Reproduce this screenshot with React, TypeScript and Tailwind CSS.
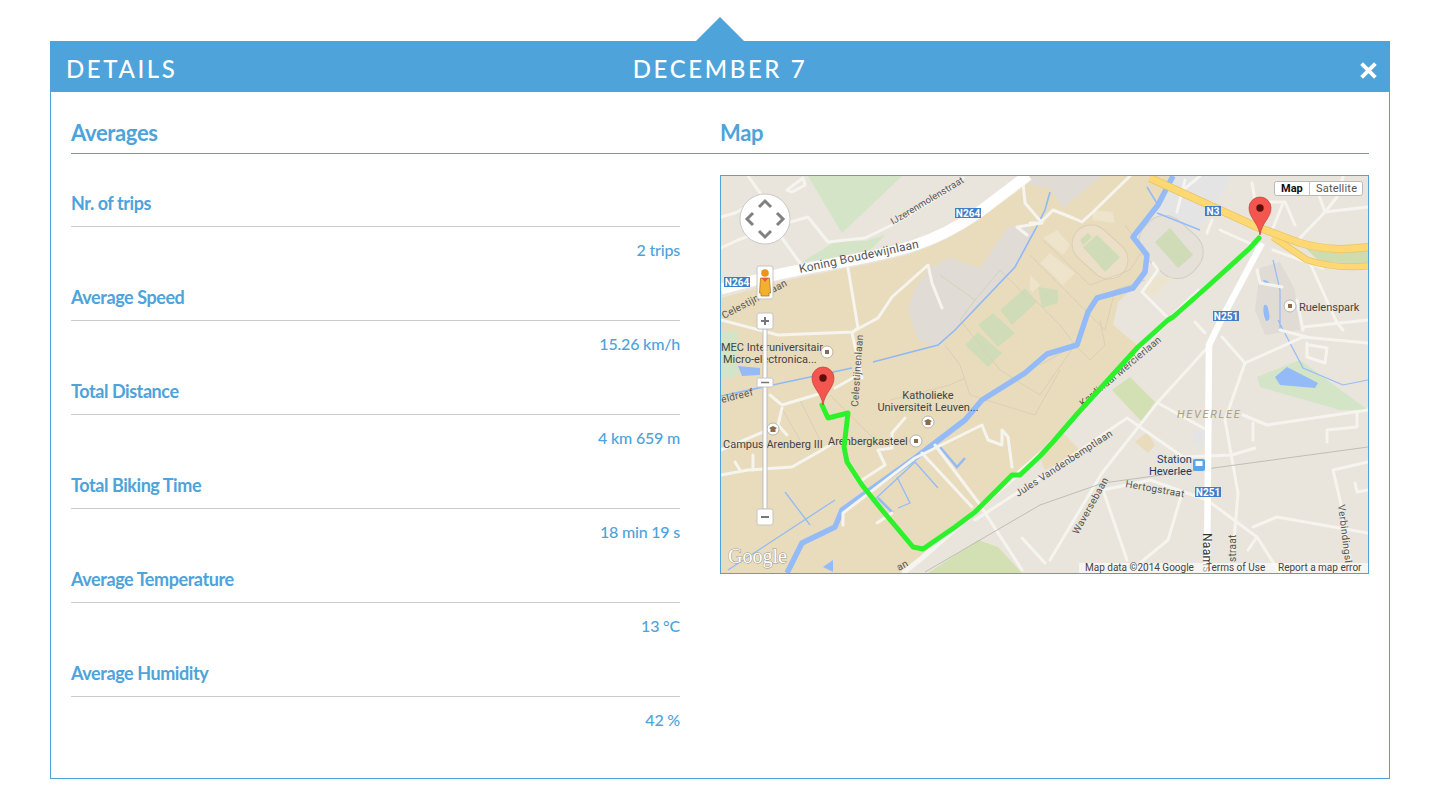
import React from "react";

const rows = [
  { label: "Nr. of trips", value: "2 trips" },
  { label: "Average Speed", value: "15.26 km/h" },
  { label: "Total Distance", value: "4 km 659 m" },
  { label: "Total Biking Time", value: "18 min 19 s" },
  { label: "Average Temperature", value: "13 °C" },
  { label: "Average Humidity", value: "42 %" },
];

const minorRoads = [
  "M748,176 L765,200 L782,238 L800,263",
  "M721,217 L735,213 L750,205 M721,248 L738,240 L760,232",
  "M787,190 L803,178 L805,185 L792,192 Z",
  "M787,223 L808,217 L828,242 L865,238 L892,225 L945,193 L963,178",
  "M848,268 L858,328 L852,333 L862,378",
  "M721,320 L778,335 L852,332 L878,318 L892,297 L928,265 L932,283 L942,308",
  "M1023,183 L1025,203 L1042,223 L1017,227 L1027,235",
  "M1030,223 L1040,223 L1053,210 L1073,218 L1082,222 L1093,212 L1130,176",
  "M770,395 L782,405 L822,393 M835,388 L858,375",
  "M782,408 L778,425 L787,435",
  "M721,450 L768,430",
  "M721,475 L748,470 L792,467 L822,450 L830,445",
  "M735,462 L740,470 M753,455 L753,470",
  "M862,480 L885,465 L878,450 L892,448 L892,433 L905,418",
  "M843,525 L843,513 L915,458 L982,425 L988,440 L1002,445 L1002,430 L1008,437 L1012,467",
  "M922,453 L972,507 M935,445 L978,502 L1022,570",
  "M877,523 L892,513",
  "M1022,538 L1045,563",
  "M975,520 L1040,478 L1127,418 L1183,457 L1232,455 L1255,448",
  "M1153,263 L1158,270 L1142,292 L1167,317",
  "M1207,348 L1158,402 L1102,473 L1050,560",
  "M1158,403 L1207,430",
  "M1222,337 L1245,363 L1225,420 L1238,493 L1233,553",
  "M1245,363 L1303,337 L1368,343",
  "M1195,322 L1205,333",
  "M1243,415 L1267,425 L1368,410",
  "M1253,423 L1253,440",
  "M1327,442 L1327,430 L1357,427 L1357,413",
  "M1103,490 L1150,480 L1207,500 L1257,537 L1280,573",
  "M1253,527 L1277,517 L1368,533",
  "M1103,490 L1127,560",
  "M1168,540 L1182,493 M1168,540 L1140,563",
  "M1257,537 L1248,550",
  "M1333,470 L1368,462 M1333,470 L1340,500 L1350,560",
  "M1355,483 L1357,492 L1368,490",
  "M1280,330 L1307,337",
  "M1307,343 L1307,357 L1325,363 L1327,348 L1310,345",
  "M1185,180 L1177,212 M1200,176 L1183,190",
  "M1207,233 L1212,220",
  "M1220,230 L1258,247",
  "M1252,183 L1257,212",
  "M1283,203 L1273,228",
  "M1267,202 L1285,202 L1295,225",
  "M1317,190 L1325,212 L1300,238",
  "M1325,212 L1368,207",
  "M1325,212 L1337,197 L1343,177",
  "M1273,250 L1323,268",
  "M1310,263 L1337,323 L1343,330",
  "M1257,270 L1260,283 L1282,287",
  "M1303,327 L1368,320 M1297,300 L1303,330",
];

const landLines = [
  "M1030,255 L1075,300 L1105,330 L1115,290 L1145,280",
  "M1043,240 L1090,285 L1130,270 L1143,250 L1125,225",
  "M1030,295 L1060,325 L1075,345 L1040,365",
  "M945,345 L960,365 L970,395 L1035,415 L1060,370",
  "M1000,370 L1040,395 L1075,345",
  "M1100,320 L1105,345 L1090,360 L1075,345",
  "M780,405 L800,440 M800,400 L820,440 M830,395 L875,440",
  "M890,400 L950,385 L965,378",
  "M1000,270 L1030,300 M960,320 L1000,370",
  "M940,275 L975,300 L960,320 M975,300 L1000,270",
];

function Pin({ x, y }: { x: number; y: number }) {
  return (
    <g transform={`translate(${x} ${y})`}>
      <path d="M0,0 C-2,-13 -11,-17 -11,-27 a11,11 0 1 1 22,0 C11,-17 2,-13 0,0 Z" fill="#f2564e" stroke="#c5403a" strokeWidth="0.7" />
      <circle cx="0" cy="-27" r="3.7" fill="#5b0f0b" />
    </g>
  );
}

function Poi({ x, y, cap }: { x: number; y: number; cap?: boolean }) {
  return (
    <g>
      <circle cx={x} cy={y} r="6" fill="#fff" stroke="#aaa69d" strokeWidth="0.8" />
      {cap ? (
        <path d={`M${x - 4},${y - 1} L${x},${y - 3} L${x + 4},${y - 1} L${x + 2.5},${y} L${x + 2.5},${y + 3} L${x - 2.5},${y + 3} L${x - 2.5},${y} Z`} fill="#8d6a4a" />
      ) : (
        <rect x={x - 2} y={y - 2} width="4" height="4" fill="#8d6a4a" />
      )}
    </g>
  );
}

function MapView() {
  return (
    <svg viewBox="721 176 647 397" className="block h-[397px] w-[647px]" style={{ fontFamily: "Roboto, sans-serif" }}>
      <rect x="721" y="176" width="647" height="397" fill="#e9e5dc" />
      {/* campus land */}
      <path d="M721,298 L775,283 C830,270 880,264 915,252 C945,242 965,229 985,215 L1030,182 L1030,176 L1173,176 L1158,205 L1133,237 L1147,255 L1145,272 L1133,288 L1118,302 L1113,325 L1137,345 L1045,447 L922,558 L900,573 L721,573 Z" fill="#e9dcbc" />
      <path d="M1135,442 L1147,432 L1155,445 L1148,453 Z M1063,433 L1083,453 L1045,470 L1040,458 Z" fill="#e9dcbc" />
      {/* greens */}
      <path d="M808,176 L902,176 L842,233 Z" fill="#d3e4c7" />
      <path d="M802,262 L838,240 L865,241 L885,235 L870,250 L820,260 Z" fill="#d3e4c7" />
      <path d="M721,330 L738,332 L738,376 L721,380 Z" fill="#d3e4c7" />
      <path d="M1000,310 L1025,288 L1037,302 L1012,325 Z M978,325 L993,313 L1015,333 L998,347 Z M965,345 L978,332 L1002,353 L988,367 Z" fill="#d0dcb8" />
      <path d="M1038,287 L1058,290 L1058,303 L1042,308 Z M1030,295 L1034,302 L1030,308 Z" fill="#d0dcb8" />
      <path d="M1257,377 L1300,360 L1327,380 L1368,410 L1340,410 L1260,387 Z" fill="#d3e4c7" />
      <path d="M1112,390 L1130,377 L1155,402 L1142,422 Z" fill="#d3e0b4" />
      <path d="M928,573 L978,540 L998,547 L1022,573 Z" fill="#d3e0b4" />
      {/* gray zones */}
      <path d="M908,310 L915,288 L928,270 L948,258 L980,268 L1008,227 L1020,225 L1035,230 L1015,267 L955,330 L938,347 L918,340 Z" fill="#e0dcd5" />
      <path d="M1030,185 L1050,188 L1063,208 L1102,176 L1030,176 Z" fill="#e0dcd5" />
      <path d="M1260,268 L1280,262 L1295,290 L1300,330 L1265,335 L1255,310 Z" fill="#e0dcd5" />
      <path d="M1193,430 L1205,430 L1205,445 L1193,445 Z M1170,176 L1230,176 L1222,195 L1200,228 L1157,213 Z" fill="#e4e4e4" />
      {/* stadiums and buildings */}
      <rect x="1069" y="233" width="62" height="38" rx="19" transform="rotate(42 1100 252)" fill="#ecdfc7" stroke="#d8cfb5" />
      <path d="M1083,247 L1097,235 L1120,257 L1105,272 Z M1080,240 L1088,233 L1092,237 L1083,245 Z" fill="#d0dcb8" />
      <rect x="1138" y="222" width="66" height="50" rx="22" transform="rotate(42 1171 247)" fill="#e5e1d9" stroke="#d3cec3" />
      <path d="M1155,242 L1170,228 L1193,255 L1178,268 Z" fill="#d0dcb8" />
      <path d="M1040,263 L1050,253 L1075,273 L1063,285 Z M1043,238 L1057,230 L1070,245 L1063,255 Z M1093,210 L1113,212 L1115,223 L1093,220 Z M1030,275 L1040,285 L1033,292 L1030,290 Z" fill="#eee3cb" />
      <path d="M1150,275 L1173,278 L1153,297 L1142,288 Z" fill="#ece4cf" />
      <g fill="none" stroke="#dad0b8" strokeWidth="1">
        {landLines.map((d) => (
          <path key={d} d={d} />
        ))}
      </g>
      {/* water */}
      <path d="M787,573 L802,543 L835,527 L842,510 L915,458 L965,420 L982,400 L1025,373 L1047,354 L1077,345 L1088,312 L1097,298 L1133,288 L1145,272 L1147,255 L1133,237 L1158,205 L1173,176" fill="none" stroke="#94bbf7" strokeWidth="5.5" strokeLinejoin="round" />
      <path d="M1147,187 L1158,205 M1157,213 L1200,230" fill="none" stroke="#94bbf7" strokeWidth="1.5" />
      <path d="M721,396 L852,368 M873,362 L938,345 L955,330 L1015,267 L1035,230 L1045,210 L1050,192" fill="none" stroke="#8fb8f6" strokeWidth="1.6" />
      <path d="M785,492 L810,525 M728,570 L835,500 M872,502 L915,462 L938,488 M897,477 L910,503 L898,508" fill="none" stroke="#94bbf7" strokeWidth="1.3" />
      <path d="M878,498 L893,513 M940,447 L957,467 L965,458" fill="none" stroke="#94bbf7" strokeWidth="2.5" />
      <path d="M1278,320 L1303,368 L1343,385 L1368,380 M1273,260 L1280,290 L1280,330" fill="none" stroke="#94bbf7" strokeWidth="1.2" />
      <path d="M1275,377 L1287,367 L1318,383 L1315,388 L1280,385 Z" fill="#94bbf7" />
      <path d="M1264,305 q4,-2 5,8 q2,8 -3,8 q-4,-8 -2,-16 Z M1263,280 q5,0 7,4 l-5,1 Z M738,366 L760,368 L760,375 L742,376 Z M823,567 L833,560 L833,572 Z" fill="#94bbf7" />
      {/* minor roads */}
      <g fill="none" stroke="#f6f4ef" strokeWidth="3" strokeLinejoin="round" strokeLinecap="round">
        {minorRoads.map((d) => (
          <path key={d} d={d} />
        ))}
      </g>
      <path d="M1200,290 L1137,351 L1045,450 L922,558 L903,573" fill="none" stroke="#f6f4ef" strokeWidth="5" />
      {/* railway */}
      <path d="M925,572 L1040,505 L1103,483 L1368,447" fill="none" stroke="#bfbdb8" strokeWidth="1" />
      {/* main roads */}
      <path d="M721,289 L775,275 C830,263 880,257 915,245 C945,235 965,222 978,213 L1028,175" fill="none" stroke="#ffffff" strokeWidth="11" />
      <path d="M1207,574 L1209,345 L1220,322 L1262,243" fill="none" stroke="#ffffff" strokeWidth="6.5" />
      <path d="M1300,243 L1369,250 L1369,264 L1320,262 Z" fill="#cfdcb0" />
      <path d="M1273,237 L1307,260 C1325,266 1345,268 1369,266" fill="none" stroke="#e8c468" strokeWidth="7" />
      <path d="M1273,237 L1307,260 C1325,266 1345,268 1369,266" fill="none" stroke="#fdd873" strokeWidth="5.5" />
      <path d="M1150,178 L1257,227 L1300,243 C1325,250 1345,250 1369,247" fill="none" stroke="#e8c468" strokeWidth="8" />
      <path d="M1150,178 L1257,227 L1300,243 C1325,250 1345,250 1369,247" fill="none" stroke="#fdd873" strokeWidth="6.5" />
      {/* road labels */}
      <g fill="#555" fontSize="10" letterSpacing="0.3">
        <text transform="translate(800 273) rotate(-12)" fontSize="12" letterSpacing="0.2">Koning Boudewijnlaan</text>
        <text transform="translate(893 225) rotate(-31)" fontSize="9.5" letterSpacing="0.1">IJzerenmolenstraat</text>
        <text transform="translate(724 319) rotate(-28)">Celestijnenlaan</text>
        <text transform="translate(858 407) rotate(-86)">Celestijnenlaan</text>
        <text transform="translate(722 403) rotate(-14)">eldreef</text>
        <text transform="translate(1083 407) rotate(-40)">Kardinaal Mercierlaan</text>
        <text transform="translate(1018 497) rotate(-33)">Jules Vandenbemptlaan</text>
        <text transform="translate(1078 535) rotate(-61)">Waversebaan</text>
        <text transform="translate(1125 487) rotate(10)">Hertogstraat</text>
        <text transform="translate(1203 533) rotate(90)" fontSize="12" fill="#333">Naams</text>
        <text transform="translate(1236 562) rotate(-90)">straat</text>
        <text transform="translate(1338 505) rotate(83)">Verbindingsl</text>
        <text transform="translate(899 571) rotate(-30)">an</text>
      </g>
      <g fontSize="11" fill="#444">
        <text x="721" y="351">MEC Interuniversitair</text>
        <text x="723" y="363">Micro-electronica...</text>
        <text x="723" y="448">Campus Arenberg III</text>
        <text x="828" y="445">Arenbergkasteel</text>
        <text x="928" y="399" textAnchor="middle">Katholieke</text>
        <text x="928" y="411" textAnchor="middle">Universiteit Leuven...</text>
        <text x="1299" y="311">Ruelenspark</text>
        <text x="1177" y="418" fontStyle="italic" fill="#a89f85" letterSpacing="1.7">HEVERLEE</text>
        <text x="1157" y="463" fill="#1c3e63">Station</text>
        <text x="1149" y="475" fill="#1c3e63">Heverlee</text>
      </g>
      {/* road shields */}
      <g fontSize="10" fontWeight="700" fill="#fff" textAnchor="middle">
        <rect x="955" y="208" width="26" height="10" fill="#3f7fc9" />
        <text x="968" y="217">N264</text>
        <rect x="724" y="277" width="26" height="10" fill="#3f7fc9" />
        <text x="737" y="286">N264</text>
        <rect x="1205" y="206" width="16" height="10" fill="#3f7fc9" />
        <text x="1213" y="215">N3</text>
        <rect x="1213" y="311" width="26" height="10" fill="#3f7fc9" />
        <text x="1226" y="320">N251</text>
        <rect x="1195" y="487" width="26" height="10" fill="#3f7fc9" />
        <text x="1208" y="496">N251</text>
      </g>
      <Poi x={827} y={352} />
      <Poi x={773} y={429} cap />
      <Poi x={928} y={422} cap />
      <Poi x={916} y={441} />
      <Poi x={1290} y={306} />
      <rect x="1193" y="459" width="12" height="12" rx="2" fill="#5aa5e8" />
      <rect x="1195.5" y="461" width="7" height="5" fill="#fff" />
      {/* route */}
      <path
        d="M822,405 L828,418 L848,413 L844,447 L847,462 L862,485 L882,510 L913,547 L923,549 L955,527 L975,512 L1012,475 L1020,475 L1040,456 L1052,443 L1078,413 L1138,347 L1168,320 L1173,317 L1207,287 L1250,248 L1259,238"
        fill="none"
        stroke="#2cf22c"
        strokeWidth="5"
        strokeLinejoin="round"
        strokeLinecap="round"
      />
      <Pin x={823} y={405} />
      <Pin x={1260} y={235} />
      {/* google mark */}
      <text x="728" y="563" fontSize="20" fontFamily="Liberation Serif, serif" fill="#fff" stroke="#9c9788" strokeWidth="1" paintOrder="stroke">Google</text>
      {/* pan control */}
      <circle cx="765" cy="219" r="25" fill="#fff" stroke="#c9c9c9" strokeWidth="1" />
      <path d="M759,207 L765,201 L771,207 M759,231 L765,237 L771,231 M753,213 L747,219 L753,225 M777,213 L783,219 L777,225" fill="none" stroke="#808080" strokeWidth="3" />
      {/* pegman */}
      <rect x="757" y="266" width="16" height="33" rx="2" fill="#fff" stroke="#c4c4c4" />
      <circle cx="765" cy="273" r="3.8" fill="#e8951e" />
      <path d="M760.5,278 L769.5,278 L770.5,293 L769,293 L769,296 L761,296 L761,293 L759.5,293 Z" fill="#f2b02e" stroke="#a96f11" strokeWidth="0.7" />
      <path d="M761.5,278 L768.5,278 L765,282 Z" fill="#e25b4d" />
      {/* zoom slider */}
      <rect x="763" y="329" width="4" height="180" fill="#fff" stroke="#b2b2b2" strokeWidth="0.8" />
      <rect x="757" y="313" width="16" height="16" rx="2" fill="#fff" stroke="#c4c4c4" />
      <path d="M761,321 L769,321 M765,317 L765,325" stroke="#777" strokeWidth="2" />
      <rect x="757" y="378" width="16" height="9" rx="1.5" fill="#fff" stroke="#c4c4c4" />
      <path d="M761,382.5 L769,382.5" stroke="#777" strokeWidth="1.5" />
      <rect x="757" y="509" width="16" height="16" rx="2" fill="#fff" stroke="#c4c4c4" />
      <path d="M761,517 L769,517" stroke="#777" strokeWidth="2" />
      {/* map type */}
      <rect x="1274.5" y="181.5" width="88" height="14" rx="2" fill="#fff" stroke="#b9b9b9" />
      <path d="M1309.5,181.5 L1309.5,195.5" stroke="#c4c4c4" />
      <text x="1281" y="192" fontSize="11" fontWeight="700" fill="#111">Map</text>
      <text x="1316" y="192" fontSize="11" fill="#555" letterSpacing="0.2">Satellite</text>
      {/* attribution */}
      <rect x="1079" y="563" width="289" height="10" fill="#fff" opacity="0.6" />
      <g fontSize="10" fill="#444">
        <text x="1085" y="571">Map data ©2014 Google</text>
        <text x="1206" y="571">Terms of Use</text>
        <text x="1278" y="571">Report a map error</text>
      </g>
    </svg>
  );
}

export default function App() {
  return (
    <div className="min-h-[799px] bg-white px-[50px] pt-[41px] font-['Lato',sans-serif]">
      <div className="relative h-[738px] border border-[#4da3da] bg-white">
        <svg viewBox="0 0 48 24" className="absolute left-[645px] top-[-25px] h-[24px] w-[48px]">
          <path d="M0,24 L24,0 L48,24 Z" fill="#4da3da" />
        </svg>
        <div className="-mx-px -mt-px grid h-[51px] grid-cols-3 items-center bg-[#4da3da] px-[12px] pt-[4px] text-[24px] font-medium tracking-[2.6px] text-white">
          <div className="pl-[4px]">DETAILS</div>
          <div className="text-center">DECEMBER 7</div>
          <div className="flex justify-end pr-[1px] pt-[3px]">
            <svg viewBox="0 0 16 16" className="h-[17px] w-[17px]">
              <path d="M1.5,1.5 L14.5,14.5 M14.5,1.5 L1.5,14.5" stroke="#fff" strokeWidth="3.6" fill="none" />
            </svg>
          </div>
        </div>
        <div className="px-[20px] pt-[20px]">
          <div className="grid h-[42px] grid-cols-[609px_649px] items-center gap-x-[40px] border-b border-[#4da3da] text-[22px] font-bold tracking-[-0.35px] text-[#4da3da]">
            <div>Averages</div>
            <div>Map</div>
          </div>
          <div className="grid grid-cols-[609px_649px] items-start gap-x-[40px] pt-[21px]">
            <div className="pt-[5px]">
              {rows.map((r) => (
                <div key={r.label} className="text-[#4da3da]">
                  <div className="flex h-[47px] items-center border-b border-[#cccccc] text-[18px] font-bold tracking-[-0.43px]">{r.label}</div>
                  <div className="flex h-[47px] items-center justify-end pb-[2px] text-[16px] font-medium tracking-[-0.2px]">{r.value}</div>
                </div>
              ))}
            </div>
            <div className="border border-[#4da3da]">
              <MapView />
            </div>
          </div>
        </div>
      </div>
    </div>
  );
}
